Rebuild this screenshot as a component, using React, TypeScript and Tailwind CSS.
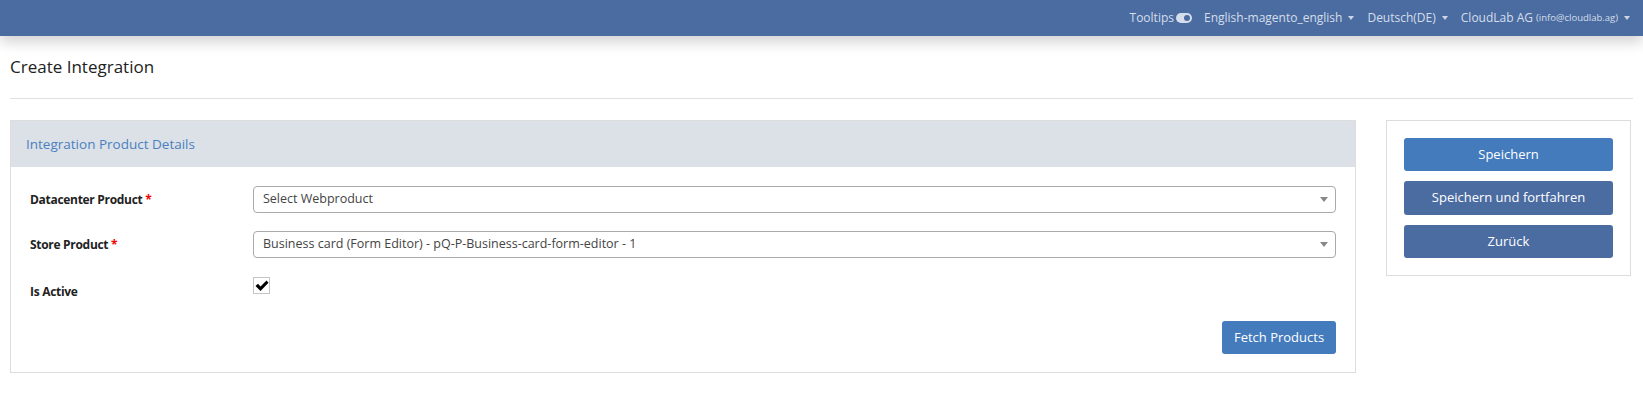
import React from "react";

function Caret() {
  return <span className="ml-[6px] inline-block h-0 w-0 border-x-[3px] border-t-[4px] border-x-transparent border-t-[#cdd6e4] align-middle" />;
}

function Toggle() {
  return (
    <svg width="16" height="10" viewBox="0 0 16 10" className="ml-[2px]">
      <rect x="0" y="0" width="16" height="10" rx="5" fill="#d5deeb" />
      <circle cx="11" cy="5" r="3" fill="#4b6ca1" />
    </svg>
  );
}

function SelectBox({ value }: { value: string }) {
  return (
    <div className="flex h-[27px] flex-1 items-center justify-between rounded-[4px] border border-[#aaa] bg-white pl-[9px] pr-[7px] text-[12.5px] text-[#444]">
      <span>{value}</span>
      <span className="inline-block h-0 w-0 border-x-[4px] border-t-[5px] border-x-transparent border-t-[#888]" />
    </div>
  );
}

export default function App() {
  return (
    <div className="min-h-[413px] bg-white font-['Open_Sans',sans-serif] text-[#222]">
      <nav className="relative z-10 flex h-9 items-center justify-end bg-[#4b6ca1] pr-[13px] text-[12px] text-[#d5deeb] shadow-[0_6px_14px_rgba(0,0,0,0.18)]">
        <span className="flex items-center">
          Tooltips
          <Toggle />
        </span>
        <span className="ml-[12px] flex items-center">
          English-magento_english
          <Caret />
        </span>
        <span className="ml-[13px] flex items-center">
          Deutsch(DE)
          <Caret />
        </span>
        <span className="ml-[13px] flex items-center">
          CloudLab AG <span className="ml-[3px] text-[9.5px]">(info@cloudlab.ag)</span>
          <Caret />
        </span>
      </nav>

      <div className="px-[10px]">
        <div className="flex h-[63px] items-center border-b border-[#e0e0e0] text-[17px] text-[#222]">
          Create Integration
        </div>

        <div className="mt-[21px] flex items-start gap-[30px] pr-[2px]">
          <div className="flex-1 border border-[#ddd]">
            <div className="flex h-[46px] items-center bg-[#dce0e7] px-[15px] text-[13.5px] text-[#4a80bf]">
              Integration Product Details
            </div>
            <div className="px-[19px] pb-[18px] pt-[19px] text-[12px]">
              <div className="flex items-center">
                <label className="w-[223px] font-bold tracking-[-0.3px] text-[#222]">
                  Datacenter Product <span className="text-[#e00]">*</span>
                </label>
                <SelectBox value="Select Webproduct" />
              </div>
              <div className="mt-[18px] flex items-center">
                <label className="w-[223px] font-bold tracking-[-0.3px] text-[#222]">
                  Store Product <span className="text-[#e00]">*</span>
                </label>
                <SelectBox value="Business card (Form Editor) - pQ-P-Business-card-form-editor - 1" />
              </div>
              <div className="mt-[19px] flex items-start">
                <label className="w-[223px] pt-[6px] font-bold tracking-[-0.3px] text-[#222]">Is Active</label>
                <div className="flex h-[17px] w-[17px] items-center justify-center border border-[#c4c4c4] bg-white">
                  <svg width="14" height="12" viewBox="0 0 14 12">
                    <path d="M0.5 6 L3 3.8 L5.5 6.5 L11.5 0.5 L13.5 2.8 L5.5 11 Z" fill="#000" />
                  </svg>
                </div>
              </div>
              <div className="mt-[20px] flex justify-end">
                <button className="h-[33px] w-[114px] rounded-[3px] bg-[#437bbd] text-[13px] text-white">
                  Fetch Products
                </button>
              </div>
            </div>
          </div>

          <div className="flex w-[245px] flex-col gap-[10px] border border-[#ddd] p-[17px]">
            <button className="h-[33px] rounded-[3px] bg-[#437bbd] text-[13px] text-white">Speichern</button>
            <button className="h-[34px] rounded-[3px] bg-[#4b6ca1] text-[13px] text-white">Speichern und fortfahren</button>
            <button className="h-[33px] rounded-[3px] bg-[#4b6ca1] text-[13px] text-white">Zurück</button>
          </div>
        </div>
      </div>
    </div>
  );
}
